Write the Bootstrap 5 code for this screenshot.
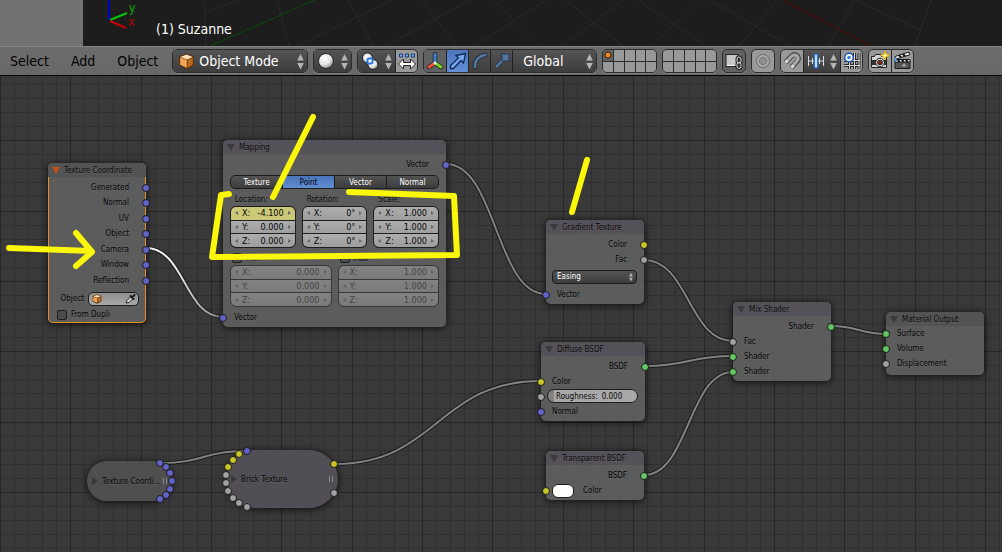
<!DOCTYPE html>
<html lang="en">
<head>
<meta charset="utf-8">
<meta name="viewport" content="width=device-width, initial-scale=1">
<title>Node Editor</title>
<link href="https://cdn.jsdelivr.net/npm/bootstrap@5.3.0/dist/css/bootstrap.min.css" rel="stylesheet">
<style>
  body { font-family: "DejaVu Sans Condensed", "DejaVu Sans", sans-serif; font-size: 14px; background: #393939; color: #000; }
  button, input, select { font: inherit; color: inherit; }
  button { padding: 0; }

  /* 3D view strip */
  .view3d { height: 46px; background: #1d1d1d; }
  .side-shelf { width: 83px; background: #727272; }
  .view-name { left: 73px; top: 19px; line-height: 20px; color: #fff; }

  /* header bar */
  .tool-header { height: 30px; gap: 5px; padding: 2px 10px; background: linear-gradient(#6c6c6c, #686868); border-top: 1px solid #858585; border-bottom: 1px solid #000; }
  .menus { gap: 22px; margin-right: 9px; }
  .menus button { border: 0; background: none; color: #000; }
  .grp { height: 24px; border: 1px solid #2b2b2b; border-radius: 5px; overflow: hidden; background: #999; box-shadow: 0 1px 0 #808080; }
  .grp > * + * { border-left: 1px solid #222 !important; }
  .cell { width: 22px; border: 0; background: none; display: flex; align-items: center; justify-content: center; }
  .drop { background: linear-gradient(#545454, #3d3d3d); color: #fff; border: 0; display: flex; align-items: center; position: relative; }
  .drop select { border: 0; background: none; appearance: none; width: 100%; height: 22px; padding: 0 0 0 10px; outline: 0; }
  .drop .updown { position: absolute; right: 3px; pointer-events: none; }
  .w-mode { width: 136px; } .w-mode select { padding-left: 26px; }
  .w-mode .lead-icon { position: absolute; left: 5px; }
  .w-pick { width: 37px; padding-left: 3px; }
  .w-orient { width: 84px; }
  .dark { background: linear-gradient(#525252, #3e3e3e); }
  .mid { background: #616161; }
  .blue { background: linear-gradient(#4d76bb, #6290d8); }
  .layers { display: grid; grid-template-columns: repeat(5, 1fr); grid-template-rows: 1fr 1fr; gap: 1px; width: 55px; background: #2b2b2b; }
  .layers button { border: 0 !important; background: #999; display: flex; align-items: center; justify-content: center; }
  .layers button.on { background: #606060; }

  /* node canvas */
  .canvas { background: #393939; }
  .canvas > svg { position: absolute; inset: 0; width: 100%; height: 100%; pointer-events: none; }
  .minor { stroke: #303030; } .major { stroke: #262626; }
  .wire-edge { fill: none; stroke: #1c1c1c; stroke-width: 4; }
  .wire-core { fill: none; stroke: #828282; stroke-width: 2; }
  .pen { fill: none; stroke: #fbf70a; stroke-width: 6; stroke-linecap: round; stroke-linejoin: round; }

  .node { position: absolute; left: var(--x); top: var(--y); width: var(--w); height: var(--h); border-radius: 5px; background: #606060e6; box-shadow: 0 1px 6px 1px #000000a0; font-size: 8px; line-height: 15px; color: #060606; display: flex; flex-direction: column; text-shadow: 0 1px 1px #77777788; }
  .node-title { height: 14px; flex: none; line-height: 16px; font-size: 8px; margin: 0 0 3px; padding-left: 16px; font-weight: 400; background: #545158; border-radius: 5px 5px 0 0; position: relative; color: #0a0a0a; }
  .node-title.plain { background: #535353; }
  .node-title::before { content: ""; position: absolute; left: 4px; top: 4px; border: 4px solid transparent; border-top: 7px solid #3c3a3e; border-bottom: 0; }
  .picked { outline: 1px solid #e38e2b; outline-offset: -1px; }
  .picked .node-title::before { border-top-color: #c4511b; }
  .sock-row { height: 15px; position: relative; flex: none; padding: 0 17px 0 11px; }
  .sock-row.out { text-align: right; }
  .sock-row::after { content: ""; position: absolute; left: -4px; top: 4px; width: 8px; height: 8px; border-radius: 50%; border: 1px solid #1b1b1b; background: var(--s); }
  .sock-row.out::after { left: auto; right: -4px; }
  .vec { --s: #6363c7; } .col-s { --s: #c7c729; } .val { --s: #a1a1a1; } .shd { --s: #63c763; }
  .spread { height: 108px; } .spread .sock-row { height: auto; flex: 1; }
  .low { margin: auto 0 2px; }

  .seg { height: 14px; margin: 3px 7px 0; border: 1px solid #1d1d1d; border-radius: 5px; overflow: hidden; background: linear-gradient(#535353, #3c3c3c); color: #fff; }
  .seg button { flex: 1; border: 0; background: none; line-height: 13px; text-shadow: none; }
  .seg button + button { border-left: 1px solid #1d1d1d; }
  .seg button.active { background: linear-gradient(#4a74b8, #5f8ed5); color: #000; }
  .trio { padding: 0 7px; gap: 6px; }
  .trio > * { flex: 1 1 0; min-width: 0; }
  .caption { height: 17px; padding: 3px 0 0 5px; line-height: 15px; }
  .off .caption { padding-left: 2px; }
  .nums { border: 1px solid #1e1e1e; border-radius: 6px; overflow: hidden; background: #1e1e1e; height: 42px; display: flex; flex-direction: column; gap: 1px; }
  .numf { flex: 1; display: flex; align-items: center; background: linear-gradient(#adadad, #9e9e9e); font-size: 9px; line-height: 12px; padding: 0 4px; gap: 4px; text-shadow: none; min-height: 0; }
  .numf::before, .numf::after { content: ""; border: 2px solid transparent; }
  .numf::before { border-right: 3px solid #666; border-left: 0; }
  .numf::after { border-left: 3px solid #666; border-right: 0; }
  .numf input { flex: 1; min-width: 0; width: 0; border: 0; background: none; padding: 0; text-align: right; height: 12px; outline: 0; }
  .numf.keyed { background: #cbc878; }
  .off .nums { background: #383838; border-color: #383838; }
  .off .numf { background: linear-gradient(#828282, #7a7a7a); color: #444; }
  .off .numf::before { border-right-color: #636363; } .off .numf::after { border-left-color: #636363; }
  .tick { appearance: none; width: 10px; height: 10px; border: 1px solid #1c1c1c; border-radius: 2px; background: #4c4c4c; margin: 0 4px 0 0; flex: none; }
  .ease { margin: 3px 7px 3px 6px; height: 14px; border: 1px solid #1d1d1d; border-radius: 4px; overflow: hidden; flex: none; text-shadow: none; }
  .ease select { height: 12px; padding-left: 4px; line-height: 12px; }
  .rough { margin: 0 9px 0 6px; height: 14px; border: 1px solid #1d1d1d; border-radius: 7px; overflow: hidden; background: linear-gradient(90deg, #828282 6px, #a9a9a9 6px); display: flex; line-height: 13px; padding-left: 8px; gap: 4px; text-shadow: none; width: 91px; }
  .rough input { border: 0; padding: 0; background: none; width: 36px; height: 13px; outline: 0; }
  .obj-row { padding: 3px 7px 0 0; gap: 4px; }
  .dupli-row { padding: 1px 0 0 9px; }
  .objf { width: 51px; height: 14px; border: 1px solid #1d1d1d; border-radius: 5px; background: linear-gradient(#8e8e8e, #aaa); display: flex; align-items: center; justify-content: space-between; padding: 0 2px 0 3px; }
  .objf input { width: 20px; border: 0; background: none; padding: 0; height: 12px; outline: 0; }
  .swatch-row { display: flex; align-items: center; gap: 9px; padding-left: 6px; }
  .swatch { border: 1px solid #1d1d1d; border-radius: 6px; background: #fff; width: 22px; height: 14px; }
  .pill { flex-direction: row; align-items: center; border-radius: 29px; background: #514f55; padding-left: 5px; }
  .pill::before { content: ""; border: 4px solid transparent; border-left: 6px solid #393939; border-right: 0; margin-right: 4px; }
  .pill::after { content: ""; width: 4px; height: 6px; border: 1px solid #888; border-width: 0 1px; margin: 0 5px 0 auto; }
  .pill.coord { background: #4f4f4f; border-radius: 20px; }
  .pill.coord::after { margin: 0 auto 0 2px; }
</style>
<script src="https://cdn.jsdelivr.net/npm/bootstrap@5.3.0/dist/js/bootstrap.bundle.min.js"></script>
</head>
<body class="vh-100 d-flex flex-column overflow-hidden">

<svg width="0" height="0" class="position-absolute" aria-hidden="true">
  <defs>
    <radialGradient id="ball" cx=".38" cy=".32" r=".7"><stop offset="0" stop-color="#fff"/><stop offset=".6" stop-color="#e4e4e4"/><stop offset="1" stop-color="#8a8a8a"/></radialGradient>
    <symbol id="updown" viewBox="0 0 7 17"><path d="M3.500 1 6.800 7.500H.2zM3.500 16.500 .2 10h6.600z" fill="#b5b5b5"/></symbol>
    <symbol id="cube" viewBox="0 0 16 16"><path d="M8 1 14.500 3.500V11.500L8.500 15 1.500 11.500V3.500z" fill="#57300d" stroke="#50300f"/><path d="M8 1.500 14 3.700 8.500 6 2 3.700z" fill="#ffe0b4"/><path d="M2 4.200 8.300 6.600V14L2 11z" fill="#f2a653"/><path d="M9 6.600 14 4.500V11L9 14z" fill="#b8691e"/></symbol>
  </defs>
</svg>

<section class="view3d d-flex flex-shrink-0" aria-label="3D view">
  <div class="side-shelf"></div>
  <div class="flex-fill position-relative overflow-hidden">
    <svg class="position-absolute top-0 start-0" width="919" height="46" viewBox="83 0 919 46" fill="none">
      <path stroke="#2a2a2a" d="M238 0 205 13M204 0l2 46M277 0l12 46M348 0l25 46M421 0l36 46M494 0l45 46M566 0l57 46M638 0l68 46M710 0l80 46M855 0l66 30M392 0l-95 46M470 0l-84 46M546 0l-71 46M623 0l-60 46M700 0l-48 46M777 0l-38 46M855 0l-27 46M931 0l-16 46"/>
      <path stroke="#0c4a0e" d="M315 0 210 46"/><path stroke="#5c0707" d="M783 0l88 46"/>
      <path stroke="#0000c8" stroke-width="2" d="M109 0V20"/><path stroke="#00c400" stroke-width="2" d="M110 20 127 13"/><path stroke="#c80000" stroke-width="2" d="M110 21 126 28"/>
      <text x="129" y="12" fill="#00b400" font-size="12">y</text><text x="128" y="26" fill="#b40000" font-size="12">x</text>
    </svg>
    <span class="view-name position-absolute">(1) Suzanne</span>
  </div>
</section>

<header class="tool-header d-flex align-items-center flex-shrink-0">
  <nav class="menus d-flex"><button type="button">Select</button><button type="button">Add</button><button type="button">Object</button></nav>
  <div class="grp d-flex w-mode"><div class="drop w-100"><svg class="lead-icon" width="17" height="17"><use href="#cube"/></svg><select aria-label="Mode"><option>Object Mode</option></select><svg class="updown" width="7" height="17"><use href="#updown"/></svg></div></div>
  <div class="grp d-flex"><button type="button" class="drop w-pick" aria-label="Viewport shading"><svg width="18" height="18"><circle cx="9" cy="9" r="7.500" fill="url(#ball)" stroke="#222"/></svg><svg class="updown" width="7" height="17"><use href="#updown"/></svg></button></div>
  <div class="grp d-flex">
    <button type="button" class="drop w-pick" aria-label="Pivot point"><svg width="18" height="18"><circle cx="6.500" cy="6" r="5" fill="url(#ball)" stroke="#222"/><circle cx="12" cy="12.500" r="5" fill="url(#ball)" stroke="#222"/><rect x="6.500" y="6.500" width="5" height="5" rx="1.500" fill="#fff" stroke="#2d78e0" stroke-width="2"/></svg><svg class="updown" width="7" height="17"><use href="#updown"/></svg></button>
    <button type="button" class="cell" aria-label="Manipulate centers"><svg width="18" height="18"><path d="M1.500 2h3v3h-3zM7.500 2h3v3h-3zM13.500 2h3v3h-3z" fill="#7db0f4" stroke="#153c78"/><path d="M.5 12 5.500 7V10.500h7V7L17.500 12l-5 5v-3.500h-7v3.500z" fill="#fff" stroke="#222"/></svg></button>
  </div>
  <div class="grp d-flex">
    <button type="button" class="cell mid" aria-label="Manipulator"><svg width="18" height="18" fill="none" stroke-linecap="round"><path d="M9 2v9M9 11l-6 4M9 11l6 4" stroke="#222" stroke-width="4.500"/><path d="M9 11l-6 4" stroke="#f0513c" stroke-width="3"/><path d="M9 11l6 4" stroke="#7bd42a" stroke-width="3"/><path d="M9 2v8" stroke="#3d7fd0" stroke-width="3"/><circle cx="9" cy="11" r="1.500" fill="#eee"/></svg></button>
    <button type="button" class="cell blue" aria-label="Translate"><svg width="18" height="18"><path d="M16.500 1.500 7 3.500l2.500 2.500L1.500 13.500V16.500H4.500L12 8.500l2.500 2.500z" fill="#78a9ee" stroke="#0e2856" stroke-width="1.300"/></svg></button>
    <button type="button" class="cell dark" aria-label="Rotate"><svg width="18" height="18" fill="none" stroke-linecap="round"><path d="M4 15C4 8 8 4 14.500 3" stroke="#252f3e" stroke-width="4.500"/><path d="M4 15C4 8 8 4 14.500 3" stroke="#54759f" stroke-width="2.500"/></svg></button>
    <button type="button" class="cell dark" aria-label="Scale"><svg width="18" height="18"><path d="M3 15 11 7" stroke="#252f3e" stroke-width="4"/><path d="M3 15 11 7" stroke="#54759f" stroke-width="2.500"/><rect x="9" y="2" width="7" height="7" fill="#54759f" stroke="#2b3a50"/></svg></button>
    <div class="drop w-orient"><select aria-label="Transform orientation"><option>Global</option></select><svg class="updown" width="7" height="17"><use href="#updown"/></svg></div>
  </div>
  <div class="grp layers" id="layers-a" role="group" aria-label="Layers 1 to 10"></div>
  <div class="grp layers" id="layers-b" role="group" aria-label="Layers 11 to 20"></div>
  <div class="grp d-flex mid"><button type="button" class="cell" aria-label="Lock to scene"><svg width="20" height="18"><rect x="2" y="2.500" width="12" height="12" fill="#c6c6c6" stroke="#222"/><path d="M3 13.500H11" stroke="#fff"/><g fill="none"><rect x="13" y="5" width="4" height="6" rx="2" stroke="#222" stroke-width="3"/><rect x="13" y="10.500" width="4" height="6" rx="2" stroke="#222" stroke-width="3"/><rect x="13" y="5" width="4" height="6" rx="2" stroke="#ddd"/><rect x="13" y="10.500" width="4" height="6" rx="2" stroke="#ddd"/></g></svg></button></div>
  <div class="grp d-flex"><button type="button" class="cell" aria-label="Proportional editing"><svg width="18" height="18" fill="none"><circle cx="9" cy="9" r="6.500" stroke="#6c6c6c"/><circle cx="9" cy="9" r="5.300" stroke="#b5b5b5"/><circle cx="9" cy="9" r="3.500" fill="#8f8f8f" stroke="#7a7a7a"/></svg></button></div>
  <div class="grp d-flex">
    <button type="button" class="cell" aria-label="Snap"><svg width="18" height="18" fill="none"><path d="M2.500 10.500 8.500 4c2-2 4.500-2 6 0s1 4-.5 5.500L8.500 15.500" stroke="#4a4a4a" stroke-width="5"/><path d="M3 10 8.500 4.300c2-2 4.500-1.500 5.700 0s1 3.500-.5 5L9 14.700" stroke="#aaa" stroke-width="3"/><path d="M2.500 10.500 4.500 8.500M8.500 15.500l2-2" stroke="#ddd" stroke-width="3"/></svg></button>
    <button type="button" class="drop w-pick" aria-label="Snap element"><svg width="18" height="18"><path d="M1.500 4v10M5.500 6v6M12.500 6v6M16.500 4v10M1.500 9h15" stroke="#ddd" fill="none"/><rect x="7.500" y="2" width="3" height="14" rx="1.500" fill="#fff" stroke="#2d78e0" stroke-width="1.500"/></svg><svg class="updown" width="7" height="17"><use href="#updown"/></svg></button>
    <button type="button" class="cell" aria-label="Snap to grid"><svg width="18" height="18" fill="none"><path d="M6.500 5v12M11.500 1v16M16 1v16M1 8.500h16M1 13.500h16" stroke="#2b2b2b" stroke-width="3"/><path d="M6.500 5v12M11.500 1v16M16 1v16M1 8.500h16M1 13.500h16" stroke="#d2d2d2"/><circle cx="6" cy="5.500" r="4.300" fill="#fff" stroke="#1d5bb8" stroke-width="1.500"/><circle cx="6" cy="5.500" r="1.800" fill="#3b86ea"/></svg></button>
  </div>
  <div class="grp d-flex">
    <button type="button" class="cell" aria-label="Render still"><svg width="20" height="20"><path d="M1.500 5.500h3l1-2h5l1 2h5v11h-15z" fill="#d4d4d4" stroke="#222"/><path d="M2 9h14v5H2z" fill="#333"/><circle cx="10" cy="11.500" r="4.300" fill="#eee" stroke="#222"/><circle cx="10" cy="11.500" r="2.500" fill="#7d2b1c" stroke="#333"/><path d="M15 0l1.200 3.300L19.500 4.500 16.200 5.700 15 9l-1.200-3.300L10.500 4.500l3.300-1.200z" fill="#fff1a0" stroke="#e0b000"/></svg></button>
    <button type="button" class="cell" aria-label="Render animation"><svg width="20" height="20"><path d="M2 10h15v7.500H2z" fill="#555" stroke="#1a1a1a"/><path d="M2 8.500h15v2.500H2z" fill="#eee" stroke="#1a1a1a"/><path d="M5 8.500l1.500 2.500M9 8.500l1.500 2.500M13 8.500l1.500 2.500" stroke="#111" stroke-width="2"/><path d="M2 5.500 16 1l.8 2.800L3 8z" fill="#eee" stroke="#1a1a1a"/><path d="M6 4l2 2.500M10 2.800 12 5.300" stroke="#111" stroke-width="2"/><path d="M9 14.300h4M11 12.500V16" stroke="#bbb"/><path d="M2.500 6.500v4" stroke="#4a90f0" stroke-width="2"/></svg></button>
  </div>
</header>

<main class="canvas flex-fill position-relative overflow-hidden">
  <svg aria-hidden="true"><path id="minor" class="minor"/><path id="major" class="major"/><g id="wires" transform="translate(0,-76)"></g></svg>

  <article class="node picked" style="--x:48px;--y:87px;--w:98px;--h:160px">
    <h2 class="node-title plain">Texture Coordinate</h2>
    <div class="spread d-flex flex-column">
      <div class="sock-row out vec">Generated</div><div class="sock-row out vec">Normal</div><div class="sock-row out vec">UV</div><div class="sock-row out vec">Object</div><div class="sock-row out vec">Camera</div><div class="sock-row out vec">Window</div><div class="sock-row out vec">Reflection</div>
    </div>
    <div class="obj-row d-flex align-items-center justify-content-end">
      <label for="obj">Object</label>
      <div class="objf"><svg width="10" height="10"><use href="#cube"/></svg><input id="obj" type="text"><svg width="11" height="11"><path d="M1 10 2 7.500 6 3.500 8 5.500 4 9.500z" fill="#ddd" stroke="#222"/><path d="M5.500 3 8.500 6M7 4.500 9.500 2" stroke="#1a1a1a" stroke-width="2" stroke-linecap="round"/></svg></div>
    </div>
    <label class="dupli-row d-flex align-items-center"><input type="checkbox" class="tick">From Dupli</label>
  </article>

  <article class="node" style="--x:223px;--y:64px;--w:223px;--h:187px">
    <h2 class="node-title">Mapping</h2>
    <div class="sock-row out vec">Vector</div>
    <div class="seg d-flex flex-shrink-0" role="group"><button type="button">Texture</button><button type="button" class="active">Point</button><button type="button">Vector</button><button type="button">Normal</button></div>
    <div class="trio d-flex">
      <div><div class="caption">Location:</div><div class="nums"><label class="numf keyed">X:<input value="-4.100"></label><label class="numf">Y:<input value="0.000"></label><label class="numf">Z:<input value="0.000"></label></div></div>
      <div><div class="caption">Rotation:</div><div class="nums"><label class="numf">X:<input value="0°"></label><label class="numf">Y:<input value="0°"></label><label class="numf">Z:<input value="0°"></label></div></div>
      <div><div class="caption">Scale:</div><div class="nums"><label class="numf">X:<input value="1.000"></label><label class="numf">Y:<input value="1.000"></label><label class="numf">Z:<input value="1.000"></label></div></div>
    </div>
    <div class="trio d-flex off">
      <div><label class="caption d-flex align-items-center"><input type="checkbox" class="tick">Min</label><div class="nums"><label class="numf">X:<input value="0.000" disabled></label><label class="numf">Y:<input value="0.000" disabled></label><label class="numf">Z:<input value="0.000" disabled></label></div></div>
      <div><label class="caption d-flex align-items-center"><input type="checkbox" class="tick">Max</label><div class="nums"><label class="numf">X:<input value="1.000" disabled></label><label class="numf">Y:<input value="1.000" disabled></label><label class="numf">Z:<input value="1.000" disabled></label></div></div>
    </div>
    <div class="sock-row vec low">Vector</div>
  </article>

  <article class="node" style="--x:546px;--y:144px;--w:98px;--h:84px">
    <h2 class="node-title">Gradient Texture</h2>
    <div class="sock-row out col-s">Color</div><div class="sock-row out val">Fac</div>
    <div class="drop ease"><select aria-label="Gradient type"><option>Easing</option></select><svg class="updown" width="4" height="10"><use href="#updown"/></svg></div>
    <div class="sock-row vec">Vector</div>
  </article>

  <article class="node" style="--x:541px;--y:266px;--w:104px;--h:79px">
    <h2 class="node-title">Diffuse BSDF</h2>
    <div class="sock-row out shd">BSDF</div><div class="sock-row col-s">Color</div>
    <div class="sock-row val p-0"><label class="rough">Roughness:<input value="0.000"></label></div>
    <div class="sock-row vec">Normal</div>
  </article>

  <article class="node" style="--x:546px;--y:375px;--w:98px;--h:49px">
    <h2 class="node-title">Transparent BSDF</h2>
    <div class="sock-row out shd">BSDF</div>
    <div class="sock-row col-s swatch-row"><button type="button" class="swatch" id="sw" aria-labelledby="swl"></button><label id="swl" for="sw">Color</label></div>
  </article>

  <article class="node" style="--x:733px;--y:226px;--w:98px;--h:79px">
    <h2 class="node-title">Mix Shader</h2>
    <div class="sock-row out shd">Shader</div><div class="sock-row val">Fac</div><div class="sock-row shd">Shader</div><div class="sock-row shd">Shader</div>
  </article>

  <article class="node" style="--x:886px;--y:236px;--w:98px;--h:63px">
    <h2 class="node-title plain mb-0">Material Output</h2>
    <div class="spread h-auto"><div class="sock-row shd">Surface</div><div class="sock-row shd">Volume</div><div class="sock-row val">Displacement</div></div>
  </article>

  <article class="node pill coord" style="--x:87px;--y:385px;--w:85px;--h:40px">Texture Coordi...</article>
  <article class="node pill" style="--x:226px;--y:374px;--w:112px;--h:58px">Brick Texture</article>

  <svg aria-hidden="true">
    <g transform="translate(0,-76)">
      <g id="dots" stroke="#1b1b1b"></g>
      <g class="pen">
        <path d="M9 248 91 251M76 233 92 252 76 266"/>
        <path d="M313 117 273 197"/><path d="M587 160 572 212"/>
        <path d="M229 194 221 195 212 257 457 255 454 196 349 192"/>
      </g>
    </g>
  </svg>
</main>

<script>
  // Layer buttons: two blocks of ten, the first layer holds the active object
  for (const [id, first] of [['layers-a', 1], ['layers-b', 11]]) {
    document.getElementById(id).innerHTML = Array.from({ length: 10 }, (_, i) => {
      const on = first + i === 1;
      return `<button type="button" class="${on ? 'on' : ''}" aria-label="Layer ${first + i}">${on ? '<svg width="8" height="8"><circle cx="4" cy="4" r="3" fill="#f08c28" stroke="#3a1c00"/></svg>' : ''}</button>`;
    }).join('');
  }

  // Background grid: every fifth line is a major one
  const step = 14.07, top0 = 76;
  const minor = document.getElementById('minor'), major = document.getElementById('major');
  function drawGrid() {
    const w = innerWidth, h = innerHeight - top0, d = ['', ''];
    for (let i = 0; i * step < w; i++) d[+(i % 5 === 0)] += `M${Math.round(i * step) + .5} 0V${h}`;
    for (let i = Math.ceil(top0 / step); i * step < h + top0; i++) d[+(i % 5 === 0)] += `M0 ${Math.floor(i * step - top0) + .5}H${w}`;
    minor.setAttribute('d', d[0]); major.setAttribute('d', d[1]);
  }
  drawGrid(); addEventListener('resize', drawGrid);

  // Links between sockets
  const links = [[146, 248, 223, 317, 'url(#lit)'], [446, 164, 546, 294], [644, 260, 733, 341], [645, 366, 733, 356], [644, 475, 733, 372], [831, 326, 887, 334], [160, 463, 247, 451], [334, 464, 541, 381]];
  document.getElementById('wires').innerHTML = '<defs><linearGradient id="lit"><stop offset=".3" stop-color="#f4f4f4"/><stop offset="1" stop-color="#777"/></linearGradient></defs>' + links.map(([a, b, c, d, s]) => {
    const m = (a + c) / 2, p = `M${a} ${b}C${m} ${b} ${m} ${d} ${c} ${d}`;
    return `<path class="wire-edge" d="${p}"/><path class="wire-core" d="${p}" ${s ? `style="stroke:${s}"` : ''}/>`;
  }).join('');

  // Sockets round the collapsed nodes
  const V = '#6363c7', Y = '#c7c729', G = '#a1a1a1';
  const dots = [[160, 463, V], [166, 467, V], [170, 473, V], [172, 481, V], [170, 489, V], [166, 495, V], [160, 499, V],
    [247, 451, V], [239, 454, Y], [233, 460, Y], [228, 467, Y], [226, 475, G], [226, 483, G], [228, 491, G], [233, 498, G], [239, 503, G], [247, 507, G], [334, 464, Y], [334, 493, G]];
  document.getElementById('dots').innerHTML = dots.map(([x, y, f]) => `<circle cx="${x}" cy="${y}" r="3.5" fill="${f}"/>`).join('');
</script>
</body>
</html>
